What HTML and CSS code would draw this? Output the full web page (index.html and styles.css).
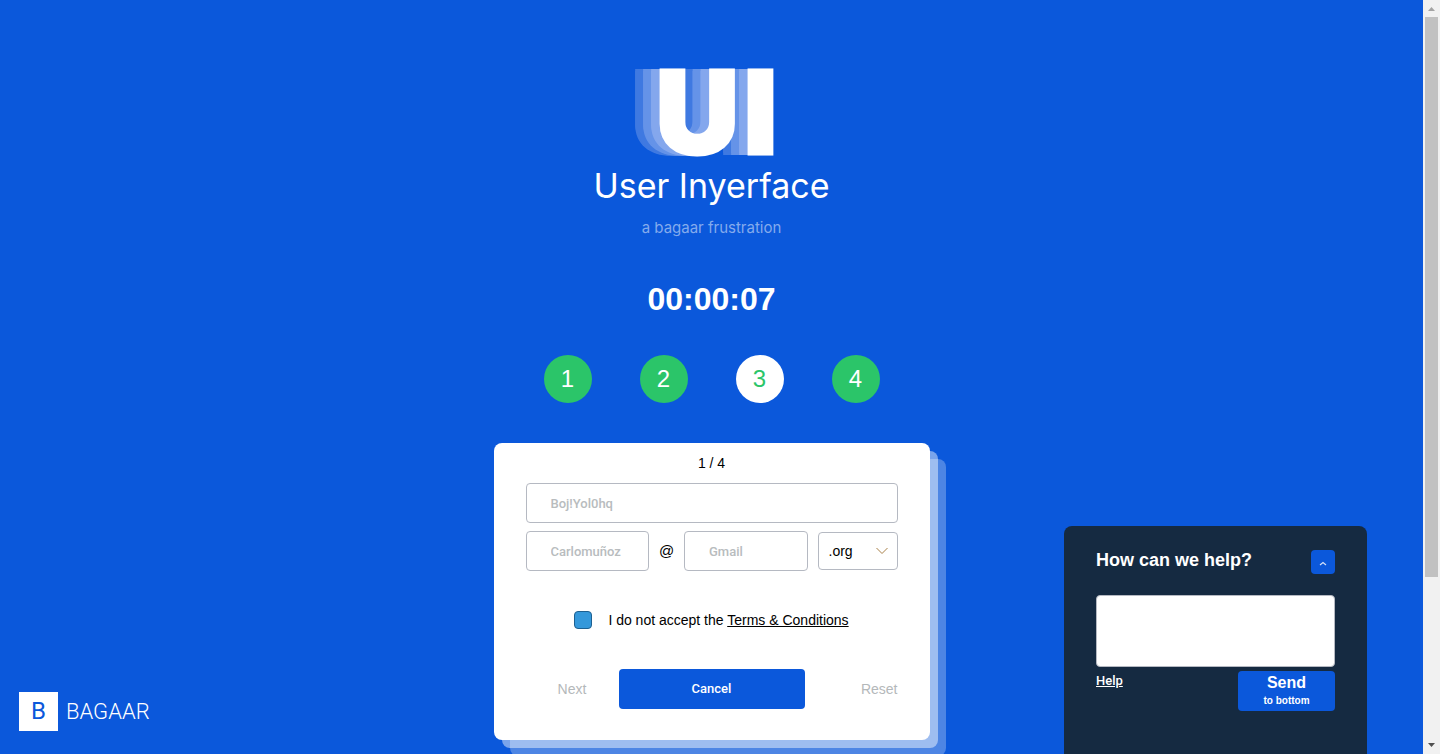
FILE: index.html
```html
<!DOCTYPE html>
<html lang="en">
<head>
<meta charset="utf-8">
<meta name="viewport" content="width=device-width, initial-scale=1">
<title>User Inyerface</title>
<link rel="stylesheet" href="styles.css">
</head>
<body>
<div class="window">
  <main class="page">
    <header class="logo">
      <div class="logo-mark"><span class="logo-u">U</span><span>I</span></div>
      <h1 class="logo-name">User Inyerface</h1>
      <p class="logo-sub">a bagaar frustration</p>
    </header>
    <div class="timer">00:00:07</div>
    <ol class="steps">
      <li class="step">1</li>
      <li class="step">2</li>
      <li class="step step-current">3</li>
      <li class="step">4</li>
    </ol>
    <form class="card">
      <div class="card-page">1 / 4</div>
      <input class="field" type="text" aria-label="Password" placeholder="Boj!Yol0hq">
      <div class="email">
        <input class="field" type="text" aria-label="Email" placeholder="Carlomuñoz">
        <span class="at">@</span>
        <input class="field" type="text" aria-label="Domain" placeholder="Gmail">
        <span class="select-wrap">
          <select class="select" aria-label="Top-level domain"><option>.org</option></select>
          <svg class="chevron" viewBox="0 0 12 8" aria-hidden="true"><path d="M.5 1 6 6.500 11.500 1" fill="none" stroke="#a88048"/></svg>
        </span>
      </div>
      <div class="terms">
        <input class="check" type="checkbox" id="terms">
        <label for="terms">I do not accept the <a href="#terms">Terms &amp; Conditions</a></label>
      </div>
      <div class="actions">
        <button class="plain" type="button">Next</button>
        <button class="primary" type="button">Cancel</button>
        <button class="plain plain-end" type="reset">Reset</button>
      </div>
    </form>
    <a class="brand" href="#bagaar" aria-label="Bagaar">
      <span class="brand-mark">B</span>
      <span class="brand-name">BAGAAR</span>
    </a>
    <section class="help">
      <div class="help-head">
        <h2 class="help-title">How can we help?</h2>
        <button class="help-toggle" type="button" aria-label="Toggle help">
          <svg viewBox="0 0 8 5" width="8" height="5" aria-hidden="true"><path d="M1 4 4 1.500 7 4" fill="none" stroke="#d4e1f8" stroke-width="1.200"/></svg>
        </button>
      </div>
      <textarea class="help-text" aria-label="Message"></textarea>
      <div class="help-foot">
        <a class="help-link" href="#help">Help</a>
        <button class="send" type="button"><span class="send-main">Send</span><span class="send-sub">to bottom</span></button>
      </div>
    </section>
  </main>
  <div class="scrollbar" aria-hidden="true">
    <svg class="arrow" viewBox="0 0 17 17"><path d="M5 11h7L8.500 7z" fill="#a3a3a3"/></svg>
    <div class="thumb"></div>
    <svg class="arrow arrow-end" viewBox="0 0 17 17"><path d="M5 6h7L8.500 10z" fill="#505050"/></svg>
  </div>
</div>
</body>
</html>
```
FILE: styles.css
```css
:root {
  --blue: #0b58db;
  --navy: #152a41;
  --green: #2bc569;
  --line: #b5b9c2;
  --trail-1: #84a7ed;
  --trail-2: #6593e8;
  --trail-3: #3f79e1;
}

* { box-sizing: border-box; }

body {
  margin: 0;
  background: var(--blue);
  color: #000;
  font: 14px/20px "Liberation Sans", Arial, sans-serif;
}

button, input, select, textarea { font: inherit; }

.window {
  display: flex;
  height: 100vh;
  overflow: hidden;
}

.page {
  position: relative;
  flex: 1;
  display: flex;
  flex-direction: column;
  align-items: center;
  padding: 62px 16px 0;
  overflow: hidden;
}

.logo {
  display: flex;
  flex-direction: column;
  align-items: center;
  color: #fff;
  font-family: "Inter", sans-serif;
}

/* Each tone of the trail is laid down four times to be as thick as the stroked letters. */
.logo-mark {
  display: flex;
  gap: 5px;
  padding-left: 10px;
  font-size: 115px;
  font-weight: 900;
  line-height: 102px;
  -webkit-text-stroke: 3px #fff;
  text-shadow:
    -10px -1px var(--trail-1), -10px 1px var(--trail-1), -7px -1px var(--trail-1), -7px 1px var(--trail-1),
    -18px -1px var(--trail-2), -18px 1px var(--trail-2), -15px -1px var(--trail-2), -15px 1px var(--trail-2),
    -26px -1px var(--trail-3), -26px 1px var(--trail-3), -23px -1px var(--trail-3), -23px 1px var(--trail-3);
}

/* Keeps the trail of the I behind the U. */
.logo-u {
  position: relative;
  z-index: 1;
}

.logo-name {
  margin: 0;
  font-size: 34px;
  font-weight: 400;
  line-height: 44px;
}

.logo-sub {
  margin: 10px 0 0;
  color: #84abed;
  font-size: 15px;
  line-height: 20px;
}

.timer {
  margin-top: 41px;
  color: #fff;
  font-size: 32px;
  font-weight: 700;
  line-height: 40px;
}

.steps {
  display: flex;
  gap: 48px;
  margin: 36px 0 40px;
  padding: 0;
  list-style: none;
}

.step {
  width: 48px;
  height: 48px;
  border-radius: 50%;
  background: var(--green);
  color: #fff;
  font-size: 24px;
  line-height: 48px;
  text-align: center;
}

.step-current {
  background: #fff;
  color: var(--green);
}

.card {
  display: flex;
  flex-direction: column;
  flex: none;
  width: 436px;
  max-width: 100%;
  padding: 10px 32px 31px;
  border-radius: 8px;
  background: #fff;
  box-shadow: 8px 8px 0 rgba(255, 255, 255, .46), 16px 16px 0 rgba(255, 255, 255, .27);
}

.card-page {
  margin-bottom: 10px;
  text-align: center;
}

.field {
  width: 100%;
  min-width: 0;
  height: 40px;
  padding: 0 24px;
  border: 1px solid var(--line);
  border-radius: 4px;
  background: #fff;
}

.field, .primary, .help-link {
  font-family: "Roboto", sans-serif;
  font-size: 13px;
  font-weight: 500;
}

.field::placeholder {
  color: #b8bcbe;
  opacity: 1;
}

.email {
  display: grid;
  grid-template-columns: 1fr 35px 1fr 90px;
  align-items: center;
  margin-top: 8px;
}

.at {
  font-size: 15px;
  text-align: center;
}

.select-wrap {
  position: relative;
  margin-left: 10px;
}

.select {
  appearance: none;
  display: block;
  width: 100%;
  height: 38px;
  padding: 0 10px;
  border: 1px solid var(--line);
  border-radius: 4px;
  background: #fff;
  color: #000;
}

.chevron {
  position: absolute;
  top: 15px;
  right: 10px;
  width: 12px;
  height: 8px;
  pointer-events: none;
}

.terms {
  display: flex;
  justify-content: center;
  align-items: center;
  gap: 16px;
  margin: 39px 0;
}

.terms a { color: inherit; }

.check {
  appearance: none;
  width: 18px;
  height: 18px;
  margin: 0;
  border: 1px solid #1d6091;
  border-radius: 4px;
  background: #3498db;
}

.actions {
  display: grid;
  grid-template-columns: 1fr 2fr 1fr;
  height: 40px;
}

.plain {
  padding: 0;
  border: 0;
  background: none;
  color: #b4b8ba;
}

.plain-end { text-align: right; }

.primary {
  border: 0;
  border-radius: 4px;
  background: var(--blue);
  color: #fff;
}

.brand {
  position: absolute;
  left: 19px;
  bottom: 23px;
  display: flex;
  align-items: center;
  gap: 8px;
  color: #fff;
  text-decoration: none;
  font: 300 24px/39px "Roboto", sans-serif;
}

.brand-mark {
  width: 39px;
  height: 39px;
  background: #fff;
  color: var(--blue);
  font-weight: 400;
  text-align: center;
}

.brand-name { font-size: 22px; }

.help {
  position: absolute;
  right: 56px;
  bottom: 0;
  width: 303px;
  padding: 24px 32px 43px;
  border-radius: 8px 8px 0 0;
  background: var(--navy);
  color: #fff;
}

.help-head {
  display: flex;
  justify-content: space-between;
  margin-bottom: 21px;
}

.help-title {
  margin: 0;
  font-size: 18px;
  line-height: 20px;
}

.help-toggle {
  display: grid;
  place-items: center;
  width: 24px;
  height: 24px;
  padding: 2px 0 0;
  border: 0;
  border-radius: 4px;
  background: var(--blue);
}

.help-text {
  display: block;
  width: 100%;
  height: 72px;
  border: 1px solid var(--line);
  border-radius: 4px;
  background: #fff;
  resize: none;
}

.help-foot {
  display: flex;
  justify-content: space-between;
  align-items: flex-start;
  margin-top: 4px;
}

.help-link { color: inherit; }

.send {
  width: 97px;
  height: 40px;
  padding: 0;
  border: 0;
  border-radius: 4px;
  background: var(--blue);
  color: #fff;
  font-weight: 700;
}

.send-main, .send-sub { display: block; }

.send-main {
  font-size: 16px;
  line-height: 20px;
}

.send-sub {
  font-size: 10px;
  line-height: 16px;
}

.scrollbar {
  display: flex;
  flex-direction: column;
  flex: none;
  width: 17px;
  background: #f1f1f1;
}

.arrow {
  flex: none;
  width: 17px;
  height: 17px;
}

.arrow-end { margin-top: auto; }

.thumb {
  height: 75%;
  max-height: 560px;
  margin: 0 2px;
  background: #c1c1c1;
}
```
